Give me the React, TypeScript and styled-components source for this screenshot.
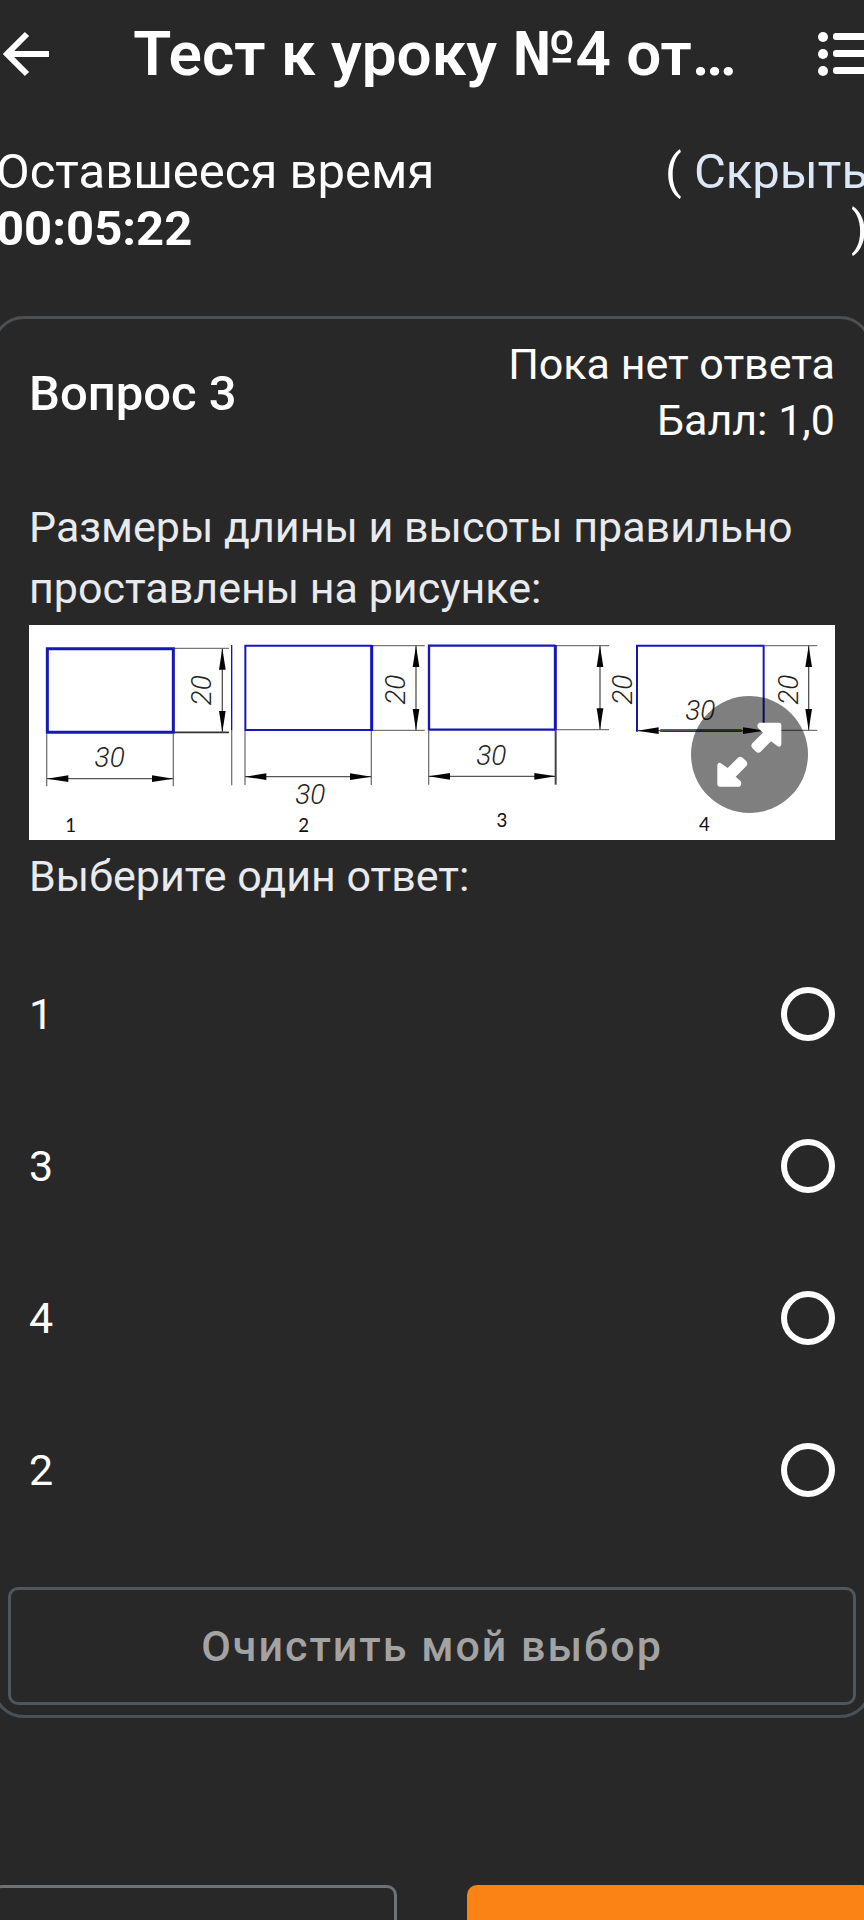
import React, { useState } from "react";
import styled, { createGlobalStyle } from "styled-components";

const GlobalStyle = createGlobalStyle`
  *, *::before, *::after { box-sizing: border-box; }
  body {
    margin: 0;
    background: #282828;
    color: #ffffff;
    font-family: Roboto, "Noto Sans", sans-serif;
  }
`;

const Page = styled.div`
  display: flex;
  flex-direction: column;
  min-height: 100vh;
  overflow: hidden;
`;

const Header = styled.header`
  display: flex;
  align-items: center;
  height: 107px;
`;

const IconButton = styled.button<{ $edge: "left" | "right" }>`
  flex: none;
  display: flex;
  justify-content: ${(p) => (p.$edge === "left" ? "flex-start" : "flex-end")};
  width: 56px;
  padding: 0;
  border: 0;
  background: none;
  color: inherit;
  margin-right: ${(p) => (p.$edge === "right" ? "-6px" : "0")};
`;

const Title = styled.h1`
  flex: 1;
  margin: 0;
  overflow: hidden;
  text-align: center;
  white-space: nowrap;
  font-size: 62px;
  line-height: 80px;
  font-weight: 600;
`;

const TimerBar = styled.div`
  display: flex;
  justify-content: space-between;
  margin: 36px -4px 0;
  font-size: 49px;
  line-height: 57px;
`;

const TimeLeft = styled.div`
  strong {
    display: block;
    font-weight: 700;
  }
`;

const HideTimer = styled.div`
  width: 204px;
  text-align: right;
  white-space: nowrap;

  a {
    color: #dce8f7;
    text-decoration: none;
  }

  span {
    display: block;
  }
`;

const Card = styled.form`
  margin: 59px -8px 0;
  padding: 17px 13px 10px;
  border: 3px solid #4b5054;
  border-radius: 32px;
`;

const CardHeader = styled.div`
  display: flex;
  align-items: center;
  justify-content: space-between;
  padding: 0 21px;
`;

const QuestionTitle = styled.h2`
  margin: 0;
  padding-top: 4px;
  font-size: 49px;
  line-height: 60px;
  font-weight: 500;
`;

const Status = styled.div`
  text-align: right;
  font-size: 43px;
  line-height: 56px;
`;

const QuestionBody = styled.div`
  margin-top: 49px;
  padding: 0 21px;
  color: #e9eaee;
  font-size: 43px;
  line-height: 61px;

  p {
    margin: 0;
  }
`;

const Figure = styled.figure`
  position: relative;
  margin: 6px 0;
  background: #ffffff;

  > svg {
    display: block;
    width: 100%;
    height: auto;
  }
`;

const ExpandButton = styled.button`
  position: absolute;
  right: 27px;
  bottom: 27px;
  width: 117px;
  height: 117px;
  padding: 0;
  border: 0;
  border-radius: 50%;
  background: rgba(0, 0, 0, 0.5);

  svg {
    display: block;
  }
`;

const Options = styled.div`
  margin-top: 31px;
  padding: 0 21px;
`;

const Option = styled.label`
  display: flex;
  align-items: center;
  justify-content: space-between;
  height: 152px;
  font-size: 43px;
  line-height: 56px;
`;

const Radio = styled.input`
  appearance: none;
  width: 54px;
  height: 54px;
  margin: 0;
  border: 6px solid #ffffff;
  border-radius: 50%;

  &:checked {
    background: radial-gradient(#ffffff 40%, transparent 44%);
  }
`;

const ClearButton = styled.button`
  display: block;
  width: 100%;
  height: 118px;
  margin-top: 41px;
  border: 3px solid #4f565c;
  border-radius: 10px;
  background: none;
  color: #a3a3a3;
  font-family: inherit;
  font-size: 43px;
  font-weight: 500;
  letter-spacing: 2px;
`;

const Footer = styled.footer`
  flex: 1;
  display: flex;
  gap: 70px;
  min-height: 35px;
  margin: 167px -8px 0;
`;

const NavButton = styled.button<{ $primary?: boolean }>`
  flex: 1;
  border: 3px solid ${(p) => (p.$primary ? "#fb8315" : "#6d7276")};
  border-bottom: 0;
  border-radius: 10px 10px 0 0;
  background: ${(p) => (p.$primary ? "#fb8315" : "none")};
`;

const BackIcon = () => (
  <svg width="52" height="52" viewBox="0 0 52 52" fill="none" stroke="currentColor" strokeWidth="6" aria-hidden="true">
    <path d="M27 6 7 26 27 46M7 26H49" />
  </svg>
);

const ListIcon = () => (
  <svg width="52" height="52" viewBox="0 0 52 52" aria-hidden="true">
    {[9, 26, 43].map((y) => (
      <g key={y} fill="currentColor">
        <circle cx="5" cy={y} r="5" />
        <rect x="15" y={y - 4} width="36" height="7" rx="3" />
      </g>
    ))}
  </svg>
);

const ExpandIcon = () => {
  const arrow =
    "M982 338H1041Q1048 338 1048 345V404Q1044 414 1035 407L1017 394 986 425Q979 431 972 425L961 414Q955 407 961 400L993 368 978 354Q973 342 982 338Z";
  return (
    <svg width="117" height="117" viewBox="777 258 351 351" fill="#ffffff" aria-hidden="true">
      <path d={arrow} />
      <path d={arrow} transform="rotate(180 952 434)" />
    </svg>
  );
};

type ArrowProps = { from: number; to: number; at: number; vertical?: boolean };

/* Dimension line with a filled arrow head at both ends. */
const DimensionLine = ({ from, to, at, vertical }: ArrowProps) => {
  const head = 64;
  return (
    <g transform={vertical ? `translate(${at} 0) rotate(90) scale(1 -1)` : `translate(0 ${at})`}>
      <path d={`M${from} 0H${to}`} stroke="#555" strokeWidth="4" />
      <path
        d={`M${from} 0L${from + head} -10V10ZM${to} 0L${to - head} -10V10Z`}
        fill="#050505"
      />
    </g>
  );
};

const Drawing = () => (
  <svg viewBox="88 44 2418 646" role="img" aria-label="Прямоугольники 1–4 с размерами">
    <g fill="none" stroke="#777" strokeWidth="4">
      <path d="M524 114H688M141 370V528M521 370V528M696 360V525" />
      <path d="M524 366H688" stroke="#333" strokeWidth="5" />
      <path d="M1118 106H1275M1118 360H1275M736 362V524M1115 362V524" />
      <path d="M1670 106H1828M1670 358H1828M1287 362V523" />
      <path d="M1668 362V523" stroke="#444" strokeWidth="6" />
      <path d="M2296 106H2453M2296 360H2453" />
    </g>
    <g fill="none" stroke="#1717b5" strokeWidth="6">
      <path d="M143 115H521V366H143Z" strokeWidth="9" />
      <path d="M696 104V360" strokeWidth="4" />
      <path d="M1116 106H737V359H1116" strokeWidth="6" />
      <path d="M1116 104V362" stroke="#1111c5" strokeWidth="9" />
      <path d="M1667 106H1288V358H1667" strokeWidth="7" />
      <path d="M1667 104V361" strokeWidth="9" />
      <path d="M1912 364V106H2292V360" />
      <path d="M1982 361H2226" strokeWidth="8" />
    </g>
    <DimensionLine from={142} to={521} at={505} />
    <DimensionLine from={736} to={1115} at={499} />
    <DimensionLine from={1287} to={1668} at={498} />
    <DimensionLine from={1913} to={2294} at={361} />
    <DimensionLine from={114} to={366} at={668} vertical />
    <DimensionLine from={106} to={360} at={1249} vertical />
    <DimensionLine from={106} to={358} at={1801} vertical />
    <DimensionLine from={106} to={360} at={2427} vertical />
    <g fill="#222" fontFamily='Roboto, sans-serif' fontSize="84" fontStyle="italic" fontWeight="300" textAnchor="middle">
      <text x="330" y="471">30</text>
      <text x="932" y="582">30</text>
      <text x="1475" y="465">30</text>
      <text x="2102" y="328">30</text>
      <text transform="translate(634 240) rotate(-90)">20</text>
      <text transform="translate(1216 238) rotate(-90)">20</text>
      <text transform="translate(1897 238) rotate(-90)">20</text>
      <text transform="translate(2396 238) rotate(-90)">20</text>
    </g>
    <g fill="#111" fontFamily='Lato, sans-serif' fontSize="56" textAnchor="middle">
      <text x="213" y="666">1</text>
      <text x="912" y="666">2</text>
      <text x="1507" y="651">3</text>
      <text x="2114" y="663">4</text>
    </g>
  </svg>
);

const answers = ["1", "3", "4", "2"];

export default function App() {
  const [selected, setSelected] = useState<string | null>(null);

  return (
    <Page>
      <GlobalStyle />
      <Header>
        <IconButton type="button" $edge="left" aria-label="Назад">
          <BackIcon />
        </IconButton>
        <Title>Тест к уроку №4 от…</Title>
        <IconButton type="button" $edge="right" aria-label="Список вопросов">
          <ListIcon />
        </IconButton>
      </Header>
      <TimerBar>
        <TimeLeft>
          Оставшееся время
          <strong>00:05:22</strong>
        </TimeLeft>
        <HideTimer>
          ( <a href="#hide">Скрыть</a>
          <span>)</span>
        </HideTimer>
      </TimerBar>
      <Card>
        <CardHeader>
          <QuestionTitle>Вопрос 3</QuestionTitle>
          <Status>
            <div>Пока нет ответа</div>
            <div>Балл: 1,0</div>
          </Status>
        </CardHeader>
        <QuestionBody>
          <p>Размеры длины и высоты правильно проставлены на рисунке:</p>
          <Figure>
            <Drawing />
            <ExpandButton type="button" aria-label="Увеличить">
              <ExpandIcon />
            </ExpandButton>
          </Figure>
          <p>Выберите один ответ:</p>
        </QuestionBody>
        <Options>
          {answers.map((answer) => (
            <Option key={answer}>
              <span>{answer}</span>
              <Radio
                type="radio"
                name="answer"
                value={answer}
                checked={selected === answer}
                onChange={() => setSelected(answer)}
              />
            </Option>
          ))}
        </Options>
        <ClearButton type="button" onClick={() => setSelected(null)}>
          Очистить мой выбор
        </ClearButton>
      </Card>
      <Footer>
        <NavButton type="button" aria-label="Предыдущий вопрос" />
        <NavButton type="button" $primary aria-label="Следующий вопрос" />
      </Footer>
    </Page>
  );
}
